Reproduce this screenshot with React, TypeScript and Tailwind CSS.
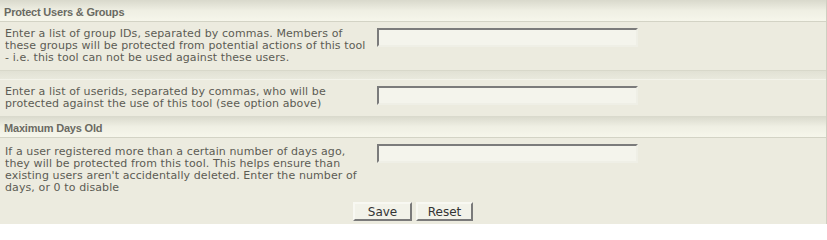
import React from "react";

function Header({ title }: { title: string }) {
  return (
    <div className="h-[22px] flex items-center pl-[4px] pt-[2px] bg-linear-to-b from-[#d9d9cc] via-[#efefe3] to-[#f6f6eb] border-b border-[#d3d3c5] font-['Liberation_Sans',Arial,sans-serif] font-bold text-[11px] tracking-[-0.2px] text-[#6a6a62]">
      {title}
    </div>
  );
}

function Input() {
  return (
    <input
      type="text"
      className="w-[261px] h-[19px] bg-[#f4f4ec] border-2 border-t-[#7b7b7b] border-l-[#7b7b7b] border-r-[#efefe6] border-b-[#efefe6] outline-none"
    />
  );
}

function Row({ children }: { children: React.ReactNode }) {
  return (
    <div className="flex">
      <div className="w-[372px] pl-[5px] py-[6px] tracking-[0.1px]">{children}</div>
      <div className="pl-[5px] pt-[6px]">
        <Input />
      </div>
    </div>
  );
}

export default function App() {
  return (
    <div className="w-[827px] h-[224px] overflow-hidden bg-[#ecebdf] border-r border-[#cfcfc1] font-['DejaVu_Sans',Verdana,sans-serif] text-[11px] leading-[12px] text-[#5c5c54]">
      <Header title="Protect Users & Groups" />
      <Row>
        Enter a list of group IDs, separated by commas. Members of
        <br />
        these groups will be protected from potential actions of this tool
        <br />- i.e. this tool can not be used against these users.
      </Row>
      <div className="h-[10px] border-t border-[#d8d8ca] border-b border-b-[#f3f3ea] bg-linear-to-b from-[#e1e1d4] to-[#e9e9dd]" />
      <Row>
        Enter a list of userids, separated by commas, who will be
        <br />
        protected against the use of this tool (see option above)
      </Row>
      <Header title="Maximum Days Old" />
      <div className="flex">
        <div className="w-[372px] pl-[5px] pt-[8px] pb-[4px] tracking-[0.1px]">
          If a user registered more than a certain number of days ago,
          <br />
          they will be protected from this tool. This helps ensure than
          <br />
          existing users aren't accidentally deleted. Enter the number of
          <br />
          days, or 0 to disable
        </div>
        <div className="pl-[5px] pt-[6px]">
          <Input />
        </div>
      </div>
      <div className="flex justify-center gap-[4px] pt-[4px]">
        <button className="w-[59px] h-[19px] bg-[#f2f2e9] border-2 border-t-[#f8f8f2] border-l-[#f8f8f2] border-r-[#7a7a7a] border-b-[#7a7a7a] text-[12px] leading-[14px] text-[#333] font-['DejaVu_Sans',Verdana,sans-serif]">
          Save
        </button>
        <button className="w-[57px] h-[19px] bg-[#f2f2e9] border-2 border-t-[#f8f8f2] border-l-[#f8f8f2] border-r-[#7a7a7a] border-b-[#7a7a7a] text-[12px] leading-[14px] text-[#333] font-['DejaVu_Sans',Verdana,sans-serif]">
          Reset
        </button>
      </div>
    </div>
  );
}
